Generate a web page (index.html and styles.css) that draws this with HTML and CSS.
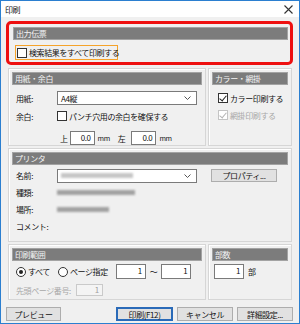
FILE: index.html
```html
<!DOCTYPE html>
<html lang="ja">
<head>
  <meta charset="UTF-8">
  <title>印刷</title>
  <link rel="stylesheet" href="styles.css">
</head>
<body>
  <div class="window">
    <div class="titlebar">
      <span class="title">印刷</span>
      <svg class="close" width="9" height="9" viewBox="0 0 9 9"><path d="M0.5 0.5L8.5 8.5M8.5 0.5L0.5 8.5" stroke="#333" stroke-width="1.1"/></svg>
    </div>
    <div class="content">
      <div class="callout">
        <div class="group-head">出力伝票</div>
        <label class="check focus"><span class="box"></span>検索結果をすべて印刷する</label>
      </div>

      <div class="row">
        <div class="group paper">
          <div class="group-head">用紙・余白</div>
          <div class="form-row first">
            <span class="label">用紙:</span>
            <div class="select"><span>A4縦</span><svg class="chev" width="7" height="4" viewBox="0 0 7 4"><path d="M0.5 0.5L3.5 3.5L6.5 0.5" fill="none" stroke="#555"/></svg></div>
          </div>
          <div class="form-row">
            <span class="label">余白:</span>
            <label class="check"><span class="box"></span>パンチ穴用の余白を確保する</label>
          </div>
          <div class="form-row margins">
            <span class="unit-label">上</span>
            <span class="input w25">0.0</span>
            <span class="mm">mm</span>
            <span class="unit-label left">左</span>
            <span class="input w25">0.0</span>
            <span class="mm">mm</span>
          </div>
        </div>
        <div class="group color">
          <div class="group-head">カラー・網掛</div>
          <label class="check first"><span class="box checked"></span>カラー印刷する</label>
          <label class="check disabled"><span class="box checked"></span>網掛印刷する</label>
        </div>
      </div>

      <div class="group printer">
        <div class="group-head">プリンタ</div>
        <div class="form-row tall">
          <span class="label">名前:</span>
          <div class="select"><span class="blur w72"></span><svg class="chev" width="7" height="4" viewBox="0 0 7 4"><path d="M0.5 0.5L3.5 3.5L6.5 0.5" fill="none" stroke="#555"/></svg></div>
          <span class="button props">プロパティ...</span>
        </div>
        <div class="form-row tall">
          <span class="label">種類:</span>
          <span class="blur w78"></span>
        </div>
        <div class="form-row tall">
          <span class="label">場所:</span>
          <span class="blur w52"></span>
        </div>
        <div class="form-row tall">
          <span class="label">コメント:</span>
        </div>
      </div>

      <div class="row">
        <div class="group range">
          <div class="group-head">印刷範囲</div>
          <div class="form-row pages">
            <label class="radio"><span class="dot on"></span>すべて</label>
            <label class="radio"><span class="dot"></span>ページ指定</label>
            <span class="input w30">1</span>
            <span class="tilde">～</span>
            <span class="input w30">1</span>
          </div>
          <div class="form-row start">
            <span class="muted">先頭ページ番号:</span>
            <span class="input w27 off">1</span>
          </div>
        </div>
        <div class="group copies">
          <div class="group-head">部数</div>
          <div class="form-row pages">
            <span class="input w30">1</span>
            <span class="copies-unit">部</span>
          </div>
        </div>
      </div>

      <div class="buttons">
        <span class="button preview">プレビュー</span>
        <span class="button default">印刷(F12)</span>
        <span class="button">キャンセル</span>
        <span class="button">詳細設定...</span>
      </div>
    </div>
  </div>
</body>
</html>
```

FILE: styles.css
```css
* {
  box-sizing: border-box;
}
body {
  margin: 0;
  font-family: "Noto Sans CJK JP", "Noto Sans", sans-serif;
  font-size: 8px;
  letter-spacing: -0.4px;
  color: #111;
  background: #fff;
  white-space: nowrap;
}
.window {
  width: 300px;
  height: 324px;
  border: 1px solid #2b7fd0;
  background: #f0f0f0;
  display: flex;
  flex-direction: column;
}
.titlebar {
  height: 16px;
  background: #fff;
  display: flex;
  align-items: center;
  justify-content: space-between;
  padding: 0 6px 0 4px;
}
.content {
  flex: 1;
  padding: 4px 6px 0 5px;
  display: flex;
  flex-direction: column;
}

/* red highlight round the first group */
.callout {
  height: 44px;
  border: 3px solid #ee1010;
  border-radius: 5px;
  padding: 3px 2px 0 4px;
}
.group-head {
  height: 13px;
  line-height: 11px;
  background: #7c7c7c;
  border: 1px solid #a3a3a3;
  color: #f4f4f4;
  padding-left: 2px;
}

.row {
  display: flex;
  gap: 2px;
  margin: 3px 1px 0 2px;
}
.group {
  border: 1px solid #d6d6d6;
  box-shadow: inset 1px 1px 0 #fff;
  padding: 3px;
}
.paper {
  width: 198px;
  height: 78px;
}
.color {
  flex: 1;
  height: 78px;
}
.printer {
  height: 94px;
  margin: 2px 1px 0 2px;
}
.range {
  width: 198px;
  height: 56px;
}
.copies {
  flex: 1;
  height: 56px;
}
.row + .printer + .row {
  margin-top: 2px;
}

.form-row {
  display: flex;
  align-items: center;
  padding-left: 4px;
  margin-top: 4px;
  height: 14px;
}
.form-row.first {
  margin-top: 6px;
}
.form-row.tall {
  margin-top: 0;
  height: 17px;
}
.form-row.tall:nth-of-type(2) {
  margin-top: 2px;
}
.form-row.margins {
  margin-top: 8px;
  padding-left: 48px;
}
.label {
  width: 41px;
  flex: none;
}

.select {
  width: 140px;
  height: 14px;
  background: #fff;
  border: 1px solid #7a7a7a;
  display: flex;
  align-items: center;
  justify-content: space-between;
  padding: 0 5px 0 3px;
}

.check {
  display: flex;
  align-items: center;
  gap: 2px;
  height: 12px;
}
.color .check {
  margin-left: 6px;
  margin-top: 5px;
}
.color .check.first {
  margin-top: 7px;
}
.check.focus {
  width: 103px;
  height: 15px;
  margin: 5px 0 0 2px;
  padding-left: 1px;
  border: 1px solid #f5a32a;
}
.box {
  width: 10px;
  height: 10px;
  background: #fff;
  border: 1px solid #333;
  position: relative;
  flex: none;
}
.box.checked::after {
  content: "";
  position: absolute;
  left: 2px;
  top: 0;
  width: 3px;
  height: 6px;
  border: solid #222;
  border-width: 0 1px 1px 0;
  transform: rotate(40deg);
}
.check.disabled {
  color: #a8a8a8;
}
.check.disabled .box {
  border-color: #c4c4c4;
}
.check.disabled .box::after {
  border-color: #b4b4b4;
}

.input {
  height: 14px;
  background: #fff;
  border: 1px solid #7a7a7a;
  text-align: right;
  padding-right: 3px;
  line-height: 12px;
}
.w25 { width: 25px; }
.w27 { width: 27px; }
.w30 { width: 30px; }
.unit-label {
  margin-right: 2px;
}
.unit-label.left {
  margin-left: 8px;
  margin-right: 6px;
}
.mm {
  margin-left: 3px;
  font-size: 7px;
}

.blur {
  height: 5px;
  background: #a2a2a2;
  filter: blur(1px);
}
.select .blur {
  background: #c6c6c6;
}
.w72 { width: 72px; }
.w78 { width: 78px; }
.w52 { width: 52px; }

.button {
  height: 13px;
  background: #e1e1e1;
  border: 1px solid #adadad;
  display: flex;
  align-items: center;
  justify-content: center;
}
.props {
  width: 66px;
  margin-left: 14px;
}

.form-row.pages {
  margin-top: 3px;
  height: 15px;
}
.radio {
  display: flex;
  align-items: center;
  gap: 2px;
  margin-right: 8px;
}
.dot {
  width: 10px;
  height: 10px;
  border: 1px solid #333;
  border-radius: 50%;
  background: #fff;
  position: relative;
}
.dot.on::after {
  content: "";
  position: absolute;
  left: 2px;
  top: 2px;
  width: 4px;
  height: 4px;
  border-radius: 50%;
  background: #222;
}
.pages .input {
  height: 15px;
}
.tilde {
  margin: 0 4px 0 4px;
}
.form-row.start {
  margin-top: 5px;
  height: 12px;
}
.muted {
  color: #a8a8a8;
  margin-right: 5px;
}
.input.off {
  height: 12px;
  line-height: 10px;
  background: #f4f4f4;
  border-color: #cacaca;
  color: #a0a0a0;
}
.copies .form-row {
  padding-left: 2px;
}
.copies-unit {
  margin-left: 4px;
}

.buttons {
  display: flex;
  gap: 4px;
  margin-top: 7px;
}
.buttons .button {
  width: 56px;
  height: 14px;
}
.buttons .preview {
  width: 55px;
  margin-right: auto;
}
.button.default {
  width: 57px;
  border: 2px solid #2a6ab8;
}
```
